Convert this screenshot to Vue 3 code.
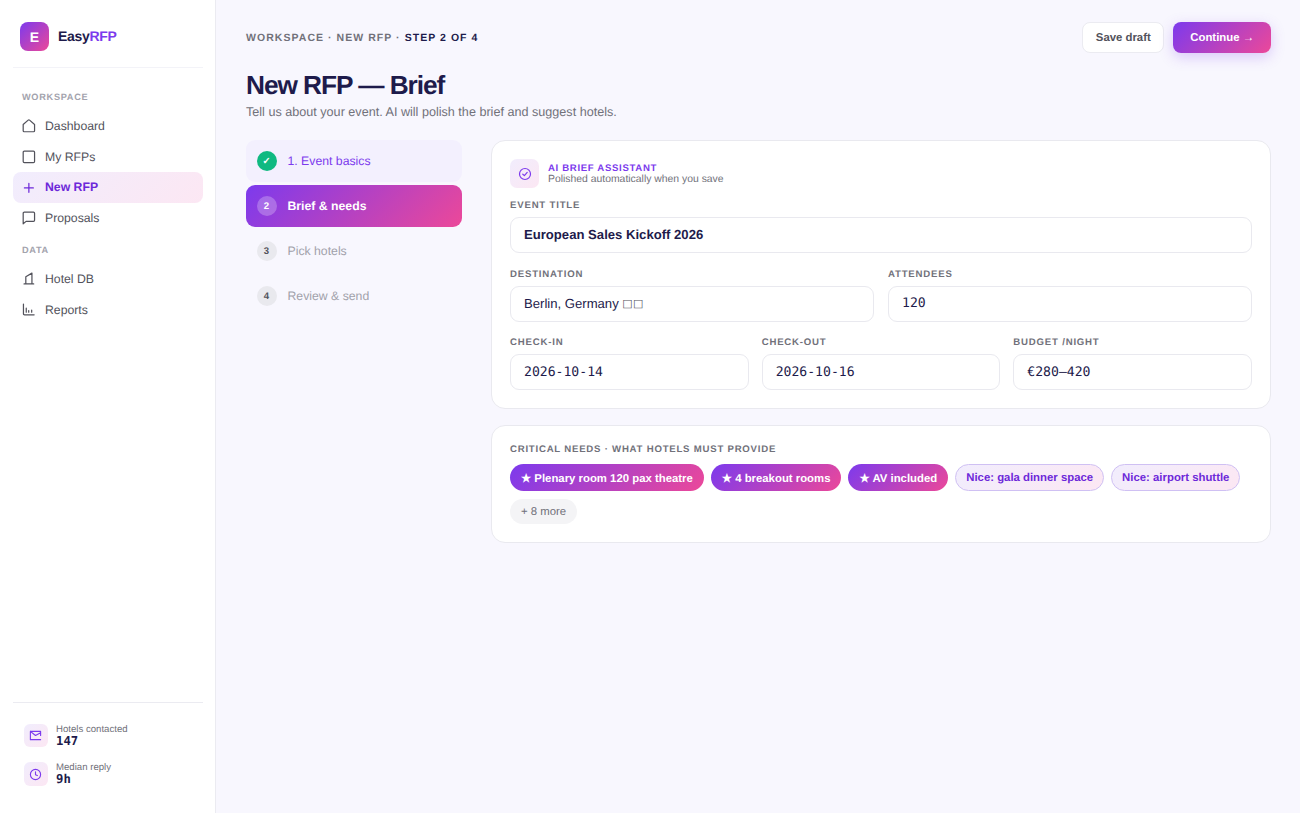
<script setup>
const workspaceNav = [
  { label: 'Dashboard', icon: 'home' },
  { label: 'My RFPs', icon: 'square' },
  { label: 'New RFP', icon: 'plus', active: true },
  { label: 'Proposals', icon: 'chat' }
]
const dataNav = [
  { label: 'Hotel DB', icon: 'building' },
  { label: 'Reports', icon: 'chart' }
]
const iconPaths = {
  home: 'M2.5 7.5 8.2 2.4a1.2 1.2 0 0 1 1.6 0l5.7 5.1v7a1.2 1.2 0 0 1-1.2 1.2H3.7a1.2 1.2 0 0 1-1.2-1.2Z',
  square: 'M3.8 2.5h10.4a1.3 1.3 0 0 1 1.3 1.3v10.4a1.3 1.3 0 0 1-1.3 1.3H3.8a1.3 1.3 0 0 1-1.3-1.3V3.8a1.3 1.3 0 0 1 1.3-1.3Z',
  plus: 'M9 3.9v10.2M3.9 9h10.2',
  chat: 'M2.5 3.7a1.2 1.2 0 0 1 1.2-1.2h10.6a1.2 1.2 0 0 1 1.2 1.2v8.1a1.2 1.2 0 0 1-1.2 1.2H5.8l-3.3 2.7Z',
  building: 'M3.5 14.8h11M5.5 14.8V6.5L12.5 2.4v12.4',
  chart: 'M2.8 2.3v11.2a1.2 1.2 0 0 0 1.2 1.2h11M6 7v4.6M8.8 9.8v1.8M12.2 9.2v2.4'
}
const steps = [
  { n: '✓', label: '1. Event basics', state: 'done' },
  { n: '2', label: 'Brief & needs', state: 'current' },
  { n: '3', label: 'Pick hotels', state: 'todo' },
  { n: '4', label: 'Review & send', state: 'todo' }
]
const dates = [
  { label: 'CHECK-IN', value: '2026-10-14' },
  { label: 'CHECK-OUT', value: '2026-10-16' },
  { label: 'BUDGET /NIGHT', value: '€280–420' }
]
const musts = ['★ Plenary room 120 pax theatre', '★ 4 breakout rooms', '★ AV included']
const nices = ['Nice: gala dinner space', 'Nice: airport shuttle']
</script>

<template>
  <div class="app">
    <aside class="sidebar">
      <div class="brand">
        <div class="logo">E</div>
        <div class="brand-name">Easy<span>RFP</span></div>
      </div>

      <div class="nav-title">WORKSPACE</div>
      <a v-for="item in workspaceNav" :key="item.label" class="nav-item" :class="{ active: item.active }">
        <svg viewBox="0 0 18 18" class="nav-icon"><path :d="iconPaths[item.icon]" /></svg>
        {{ item.label }}
      </a>

      <div class="nav-title data">DATA</div>
      <a v-for="item in dataNav" :key="item.label" class="nav-item">
        <svg viewBox="0 0 18 18" class="nav-icon"><path :d="iconPaths[item.icon]" /></svg>
        {{ item.label }}
      </a>

      <div class="side-stats">
        <div class="stat">
          <div class="stat-icon">
            <svg viewBox="0 0 14 14"><path d="M12.5 7V2.5h-11v9h11M1.5 2.5 7 7l5.5-3" /></svg>
          </div>
          <div>
            <div class="stat-label">Hotels contacted</div>
            <div class="stat-value">147</div>
          </div>
        </div>
        <div class="stat">
          <div class="stat-icon">
            <svg viewBox="0 0 14 14"><circle cx="7" cy="7" r="5.5" /><path d="M7 4v3.2l2 1" /></svg>
          </div>
          <div>
            <div class="stat-label">Median reply</div>
            <div class="stat-value">9h</div>
          </div>
        </div>
      </div>
    </aside>

    <main class="main">
      <header class="topbar">
        <div class="crumbs">WORKSPACE · NEW RFP · <b>STEP 2 OF 4</b></div>
        <div class="actions">
          <button class="btn ghost">Save draft</button>
          <button class="btn primary">Continue →</button>
        </div>
      </header>

      <h1>New RFP — Brief</h1>
      <p class="lead">Tell us about your event. AI will polish the brief and suggest hotels.</p>

      <div class="columns">
        <div class="steps">
          <div v-for="s in steps" :key="s.n" class="step" :class="s.state">
            <span class="step-num">{{ s.n }}</span>
            {{ s.label }}
          </div>
        </div>

        <div class="forms">
          <section class="card">
            <div class="ai-row">
              <div class="ai-icon">
                <svg viewBox="0 0 14 14"><circle cx="7" cy="7" r="5.5" /><path d="M4.8 7.2 6.4 8.6 9.2 5.4" /></svg>
              </div>
              <div>
                <div class="ai-title">AI BRIEF ASSISTANT</div>
                <div class="ai-sub">Polished automatically when you save</div>
              </div>
            </div>

            <div class="field">
              <label>EVENT TITLE</label>
              <div class="input strong">European Sales Kickoff 2026</div>
            </div>

            <div class="row two">
              <div class="field">
                <label>DESTINATION</label>
                <div class="input">Berlin, Germany <span class="flag">□□</span></div>
              </div>
              <div class="field">
                <label>ATTENDEES</label>
                <div class="input mono">120</div>
              </div>
            </div>

            <div class="row three">
              <div v-for="d in dates" :key="d.label" class="field">
                <label>{{ d.label }}</label>
                <div class="input mono">{{ d.value }}</div>
              </div>
            </div>
          </section>

          <section class="card needs">
            <div class="needs-title">CRITICAL NEEDS · WHAT HOTELS MUST PROVIDE</div>
            <div class="chips">
              <span v-for="m in musts" :key="m" class="chip must">{{ m }}</span>
              <span v-for="n in nices" :key="n" class="chip nice">{{ n }}</span>
              <span class="chip more">+ 8 more</span>
            </div>
          </section>
        </div>
      </div>
    </main>
  </div>
</template>

<style>
html, body {
  margin: 0;
  background: #f8f7fe;
}
</style>

<style scoped>
.app {
  display: flex;
  height: 813px;
  overflow: hidden;
  font-family: "Liberation Sans", Arial, sans-serif;
  color: #1e1b4b;
  text-rendering: geometricPrecision;
}

.sidebar {
  width: 216px;
  box-sizing: border-box;
  flex-shrink: 0;
  background: #fff;
  border-right: 1px solid #ebebf1;
  padding: 22px 12px 0 13px;
  display: flex;
  flex-direction: column;
}

.brand {
  display: flex;
  align-items: center;
  gap: 9px;
  padding: 0 0 16px 7px;
  border-bottom: 1px solid #f3f3f8;
}

.logo {
  width: 29px;
  height: 29px;
  border-radius: 8px;
  background: linear-gradient(135deg, #7c3aed, #ec4899);
  color: #fff;
  font-weight: 700;
  font-size: 14px;
  display: flex;
  align-items: center;
  justify-content: center;
}

.brand-name {
  font-size: 14px;
  font-weight: 700;
  letter-spacing: -0.3px;
  padding-bottom: 1px;
}

.brand-name span {
  color: #7c3aed;
}

.nav-title {
  font-size: 9.2px;
  font-weight: 700;
  letter-spacing: 0.7px;
  color: #a3a3ad;
  padding: 24px 0 7.6px 9px;
  line-height: 11px;
}

.nav-title.data {
  padding-top: 11.4px;
}

.nav-item {
  height: 30.75px;
  display: flex;
  align-items: center;
  gap: 8.15px;
  padding-left: 8.1px;
  border-radius: 8px;
  font-size: 12.25px;
  color: #52525b;
}

.nav-item.active {
  background: linear-gradient(135deg, #f1edfd, #fce7f3);
  color: #6d28d9;
  font-weight: 700;
}

.nav-icon {
  width: 15.75px;
  height: 15.75px;
  fill: none;
  stroke: currentColor;
  stroke-width: 1.4;
  stroke-linecap: round;
  stroke-linejoin: round;
}

.side-stats {
  margin-top: auto;
  margin-bottom: 27px;
  border-top: 1px solid #ebebf1;
  padding: 21px 0 0 11px;
  display: flex;
  flex-direction: column;
  gap: 14.5px;
}

.stat {
  display: flex;
  align-items: center;
  gap: 8.5px;
}

.stat-icon,
.ai-icon {
  width: 23.5px;
  height: 23.5px;
  border-radius: 6px;
  background: linear-gradient(135deg, #f1edfd, #fce7f3);
  display: flex;
  align-items: center;
  justify-content: center;
}

.stat-icon svg,
.ai-icon svg {
  width: 13px;
  height: 13px;
  fill: none;
  stroke: #7c3aed;
  stroke-width: 1.2;
  stroke-linecap: round;
  stroke-linejoin: round;
}

.stat-label {
  font-size: 9.625px;
  color: #71717a;
  line-height: 11px;
}

.stat-value {
  font-family: "DejaVu Sans Mono", monospace;
  font-size: 12.25px;
  font-weight: 700;
  line-height: 13px;
}

.main {
  flex: 1;
  min-width: 0;
  padding: 22px 29px 0 30px;
}

.topbar {
  display: flex;
  align-items: center;
  justify-content: space-between;
}

.crumbs {
  font-size: 10.5px;
  letter-spacing: 1.05px;
  font-weight: 700;
  color: #71717a;
  padding-top: 1px;
}

.crumbs b {
  color: #1e1b4b;
}

.actions {
  display: flex;
  gap: 9px;
}

.btn {
  font-family: inherit;
  font-size: 11.375px;
  font-weight: 700;
  height: 31px;
  border-radius: 8px;
  padding: 0 12.5px;
  border: 1px solid #ebebf1;
  text-rendering: geometricPrecision;
}

.btn.ghost {
  background: #fff;
  color: #52525b;
}

.btn.primary {
  border: none;
  padding: 0 17px;
  color: #fff;
  background: linear-gradient(135deg, #7c3aed, #ec4899);
  box-shadow: 0 4px 14px rgba(124, 58, 237, 0.25);
}

h1 {
  margin: 16px 0 0;
  font-size: 26.25px;
  line-height: 33px;
  font-weight: 700;
  letter-spacing: -1.05px;
  color: #1e1b4b;
}

.lead {
  margin: 1px 0 0;
  font-size: 12.625px;
  line-height: 18px;
  color: #71717a;
}

.columns {
  display: grid;
  grid-template-columns: 216px 1fr;
  gap: 29px;
  margin-top: 19px;
}

.steps {
  display: flex;
  flex-direction: column;
  gap: 3px;
}

.step {
  height: 42px;
  display: flex;
  align-items: center;
  gap: 11px;
  padding-left: 10.5px;
  border-radius: 9px;
  font-size: 12.25px;
  color: #a1a1aa;
}

.step-num {
  width: 20px;
  height: 20px;
  border-radius: 50%;
  background: #e9e9ee;
  color: #52525b;
  font-size: 9.625px;
  font-weight: 700;
  display: flex;
  align-items: center;
  justify-content: center;
}

.step.done {
  background: #f3f0fe;
  color: #7c3aed;
}

.step.done .step-num {
  background: #10b981;
  color: #fff;
}

.step.current {
  background: linear-gradient(135deg, #7c3aed, #ec4899);
  color: #fff;
  font-weight: 700;
}

.step.current .step-num {
  background: rgba(255, 255, 255, 0.25);
  color: #fff;
}

.forms {
  display: flex;
  flex-direction: column;
  gap: 16px;
}

.card {
  background: #fff;
  border: 1px solid #e9e9ef;
  border-radius: 14px;
  padding: 18px;
}

.ai-row {
  display: flex;
  align-items: center;
  gap: 9px;
  margin-bottom: 12px;
}

.ai-icon {
  width: 29px;
  height: 29px;
  border-radius: 7px;
}

.ai-icon svg {
  width: 14px;
  height: 14px;
}

.ai-title {
  font-size: 9.625px;
  font-weight: 700;
  letter-spacing: 0.66px;
  color: #7c3aed;
  line-height: 11px;
}

.ai-sub {
  font-size: 10.4px;
  color: #71717a;
  line-height: 11px;
}

.field {
  min-width: 0;
}

label {
  display: block;
  font-size: 9.625px;
  font-weight: 700;
  letter-spacing: 0.8px;
  color: #71717a;
  line-height: 12px;
  margin-bottom: 5px;
}

.input {
  height: 36px;
  box-sizing: border-box;
  border: 1px solid #e9e9ef;
  border-radius: 9px;
  padding: 0 13px;
  display: flex;
  align-items: center;
  font-size: 13.125px;
  color: #1e1b4b;
  white-space: pre;
}

.input.strong {
  font-weight: 700;
  padding-bottom: 1px;
}

.input.mono {
  font-family: "DejaVu Sans Mono", monospace;
}

.flag {
  font-family: "DejaVu Sans", sans-serif;
  font-size: 11px;
  color: #52525b;
  letter-spacing: 0.2px;
}

.row {
  display: grid;
  gap: 14px;
  margin-top: 15.5px;
}

.row.two {
  grid-template-columns: 1fr 1fr;
}

.row.three {
  grid-template-columns: 1fr 1fr 1fr;
  gap: 13px;
}

.needs-title {
  font-size: 9.625px;
  font-weight: 700;
  letter-spacing: 0.77px;
  color: #71717a;
  line-height: 12px;
  margin-bottom: 8px;
}

.chips {
  display: flex;
  flex-wrap: wrap;
  gap: 8px 7px;
}

.chip {
  height: 27px;
  box-sizing: border-box;
  border-radius: 14px;
  padding: 0 11px;
  display: flex;
  align-items: center;
  font-size: 11.375px;
  font-weight: 700;
}

.chip.must {
  background: linear-gradient(135deg, #7c3aed, #ec4899);
  color: #fff;
}

.chip.nice {
  background: linear-gradient(135deg, #f1edfd, #fce7f3);
  border: 1px solid #cfc0f3;
  padding: 1px 10px 0;
  color: #6d28d9;
}

.chip.more {
  height: 25px;
  background: #f4f4f6;
  color: #71717a;
  font-weight: 400;
}
</style>
